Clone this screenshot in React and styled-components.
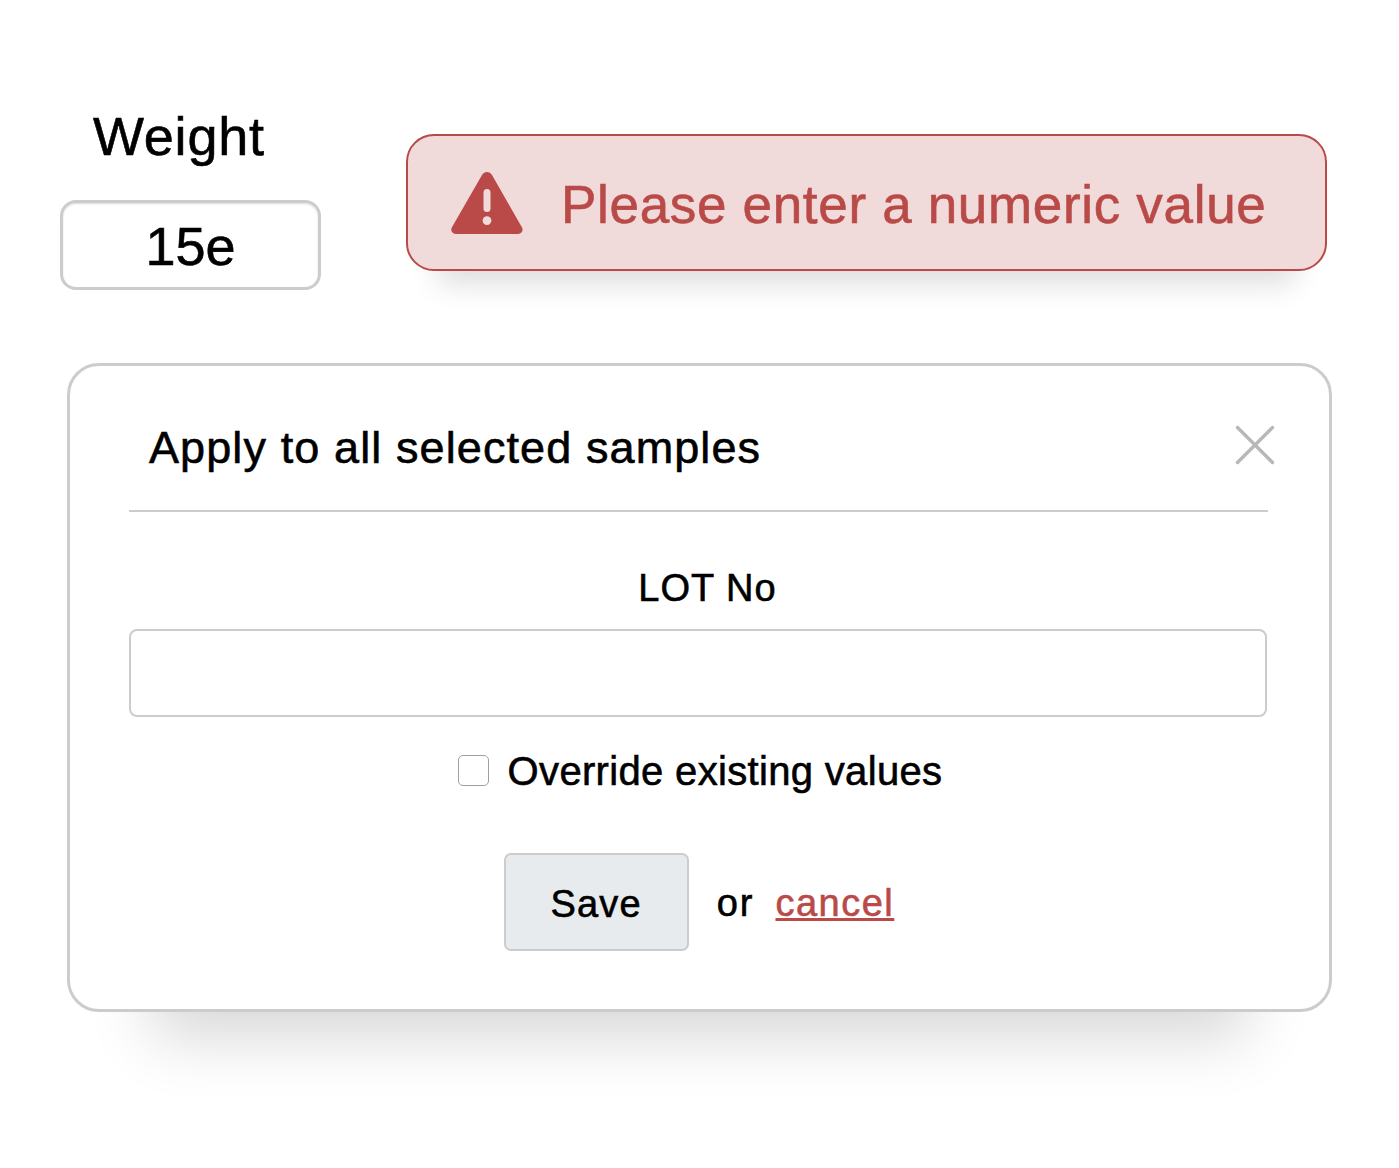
import React from "react";
import styled, { createGlobalStyle } from "styled-components";

const Global = createGlobalStyle`
  html, body { margin: 0; padding: 0; background: #fff; }
  body {
    font-family: "Liberation Sans", Arial, sans-serif;
    color: #000;
    -webkit-text-stroke: 0.6px currentColor;
  }
`;

const Page = styled.div`
  width: 1399px;
  height: 1168px;
  box-sizing: border-box;
  padding: 106px 0 0 60px;
  overflow: hidden;
`;

const TopRow = styled.div`
  display: flex;
  align-items: flex-start;
  height: 257px;
`;

const Field = styled.div`
  display: flex;
  flex-direction: column;
  width: 261px;
  margin-right: 85px;
`;

const FieldLabel = styled.div`
  font-size: 54px;
  line-height: 60px;
  letter-spacing: 0.8px;
  padding-left: 33px;
  margin-bottom: 34px;
`;

const ValueBox = styled.div`
  box-sizing: border-box;
  width: 261px;
  height: 90px;
  padding-top: 2px;
  border: 3px solid #cccccc;
  border-radius: 16px;
  box-shadow: inset 0 1px 2px rgba(0, 0, 0, 0.14);
  display: flex;
  align-items: center;
  justify-content: center;
  font-size: 54px;
  line-height: 60px;
`;

const Alert = styled.div`
  box-sizing: border-box;
  margin-top: 28px;
  width: 921px;
  height: 137px;
  background: #f0dada;
  border: 2px solid #b94a48;
  border-radius: 28px;
  box-shadow: 0 44px 30px -32px rgba(0, 0, 0, 0.14);
  display: flex;
  align-items: center;
  padding-left: 43px;
  color: #b94a48;
`;

const AlertIcon = styled.svg`
  width: 72px;
  height: 62px;
  margin-right: 38px;
  flex: none;
`;

const AlertText = styled.span`
  font-size: 53px;
  letter-spacing: 0.68px;
  margin-top: 3px;
`;

const Card = styled.div`
  box-sizing: border-box;
  margin-left: 7px;
  width: 1265px;
  height: 649px;
  border: 3px solid #cccccc;
  border-radius: 32px;
  background: #fff;
  box-shadow: 0 110px 60px -85px rgba(0, 0, 0, 0.16);
  padding: 0 61px 0 59px;
  display: flex;
  flex-direction: column;
`;

const CardHeader = styled.div`
  height: 146px;
  border-bottom: 2px solid #cccccc;
  box-sizing: border-box;
  padding-left: 20px;
  position: relative;
`;

const CardTitle = styled.div`
  font-size: 45px;
  line-height: 50px;
  letter-spacing: 1.1px;
  padding-top: 57px;
`;

const CloseIcon = styled.svg`
  position: absolute;
  right: -7px;
  top: 59px;
  width: 40px;
  height: 40px;
`;

const LotLabel = styled.div`
  text-align: center;
  font-size: 38px;
  line-height: 44px;
  letter-spacing: 1px;
  margin-top: 54px;
  margin-bottom: 19px;
  padding-left: 18px;
`;

const TextInput = styled.input`
  box-sizing: border-box;
  display: block;
  width: 1138px;
  height: 88px;
  border: 2px solid #cccccc;
  border-radius: 8px;
  background: #fff;
  outline: none;
`;

const CheckRow = styled.label`
  display: flex;
  align-items: center;
  justify-content: center;
  margin-top: 31px;
  padding-left: 3px;
  font-size: 40px;
  line-height: 46px;
  letter-spacing: 0.33px;
`;

const CheckBox = styled.span`
  box-sizing: border-box;
  width: 31px;
  height: 31px;
  margin-top: -1px;
  border: 1.5px solid #a0a0a0;
  border-radius: 5px;
  margin-right: 19px;
  background: #fff;
`;

const Actions = styled.div`
  display: flex;
  align-items: center;
  justify-content: center;
  margin-top: 59px;
  padding-left: 1px;
  font-size: 38px;
  letter-spacing: 1.2px;
`;

const SaveButton = styled.button`
  box-sizing: border-box;
  width: 185px;
  height: 98px;
  padding-top: 5px;
  background: #e8ebee;
  border: 2px solid #cccccc;
  border-radius: 7px;
  font: inherit;
  letter-spacing: inherit;
  color: #000;
  margin-right: 28px;
`;

const Or = styled.span`
  margin-right: 21px;
  margin-top: 2px;
  letter-spacing: 2px;
`;

const CancelLink = styled.a`
  margin-top: 2px;
  color: #b94a48;
  letter-spacing: 1.5px;
  text-decoration: underline;
`;

export default function App() {
  return (
    <>
      <Global />
      <Page>
        <TopRow>
          <Field>
            <FieldLabel>Weight</FieldLabel>
            <ValueBox>15e</ValueBox>
          </Field>
          <Alert>
            <AlertIcon viewBox="0 0 72 62">
              <path
                fill="#b94a48"
                d="M31 3c2.200-4 7.800-4 10 0l30 52.400c1.600 2.900-.4 6.600-3.800 6.600H4.600C1.200 62-.8 58.300.8 55.400z"
              />
              <rect x="32.500" y="17" width="7" height="23" rx="3.500" fill="#f0dada" />
              <circle cx="36" cy="48.600" r="4.400" fill="#f0dada" />
            </AlertIcon>
            <AlertText>Please enter a numeric value</AlertText>
          </Alert>
        </TopRow>
        <Card>
          <CardHeader>
            <CardTitle>Apply to all selected samples</CardTitle>
            <CloseIcon viewBox="0 0 40 40">
              <path d="M2.500 2.500L37.500 37.500M37.500 2.500L2.500 37.500" stroke="#b8b8b8" strokeWidth="3.400" strokeLinecap="round" fill="none" />
            </CloseIcon>
          </CardHeader>
          <LotLabel>LOT No</LotLabel>
          <TextInput />
          <CheckRow>
            <CheckBox />
            Override existing values
          </CheckRow>
          <Actions>
            <SaveButton>Save</SaveButton>
            <Or>or</Or>
            <CancelLink href="#">cancel</CancelLink>
          </Actions>
        </Card>
      </Page>
    </>
  );
}
